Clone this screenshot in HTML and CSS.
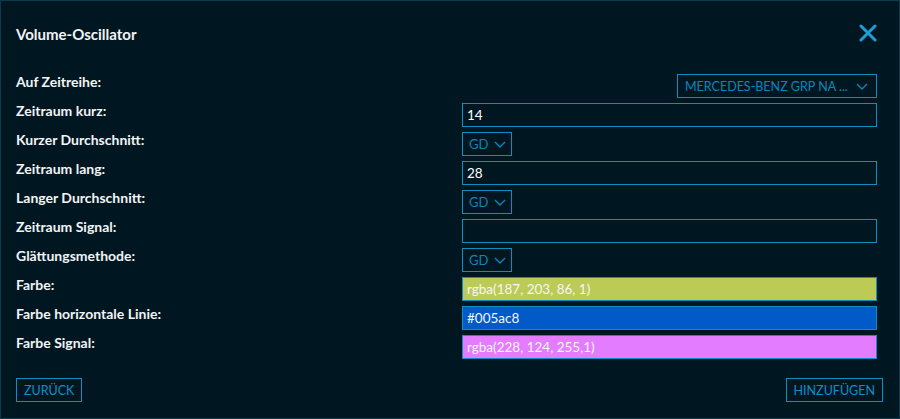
FILE: index.html
```html
<!DOCTYPE html>
<html lang="de">
<head>
    <meta charset="UTF-8">
    <meta name="viewport" content="width=device-width, initial-scale=1.0">
    <title>Volume-Oscillator</title>
    <link rel="stylesheet" href="styles.css">
</head>
<body>
    <div class="dialog">
        <div class="dialog-header">
            <h1>Volume-Oscillator</h1>
            <button class="close-btn" type="button" aria-label="Schließen">
                <svg width="18" height="18" viewBox="0 0 18 18">
                    <path d="M2 2 L16 16 M16 2 L2 16" stroke="currentColor" stroke-width="3" stroke-linecap="round"/>
                </svg>
            </button>
        </div>

        <form class="settings">
            <label>Auf Zeitreihe:</label>
            <div class="control right">
                <div class="dropdown wide">
                    <span>MERCEDES-BENZ GRP NA ...</span>
                    <svg class="chevron" width="12" height="7" viewBox="0 0 12 7"><path d="M1 1 L6 6 L11 1" fill="none" stroke="currentColor" stroke-width="1.4"/></svg>
                </div>
            </div>

            <label>Zeitraum kurz:</label>
            <input class="field" type="text" value="14">

            <label>Kurzer Durchschnitt:</label>
            <div class="control">
                <div class="dropdown">
                    <span>GD</span>
                    <svg class="chevron" width="12" height="7" viewBox="0 0 12 7"><path d="M1 1 L6 6 L11 1" fill="none" stroke="currentColor" stroke-width="1.4"/></svg>
                </div>
            </div>

            <label>Zeitraum lang:</label>
            <input class="field" type="text" value="28">

            <label>Langer Durchschnitt:</label>
            <div class="control">
                <div class="dropdown">
                    <span>GD</span>
                    <svg class="chevron" width="12" height="7" viewBox="0 0 12 7"><path d="M1 1 L6 6 L11 1" fill="none" stroke="currentColor" stroke-width="1.4"/></svg>
                </div>
            </div>

            <label>Zeitraum Signal:</label>
            <input class="field" type="text" value="">

            <label>Glättungsmethode:</label>
            <div class="control">
                <div class="dropdown">
                    <span>GD</span>
                    <svg class="chevron" width="12" height="7" viewBox="0 0 12 7"><path d="M1 1 L6 6 L11 1" fill="none" stroke="currentColor" stroke-width="1.4"/></svg>
                </div>
            </div>

            <label>Farbe:</label>
            <input class="field color" type="text" value="rgba(187, 203, 86, 1)" style="background-color: rgba(187, 203, 86, 1);">

            <label>Farbe horizontale Linie:</label>
            <input class="field color" type="text" value="#005ac8" style="background-color: #005ac8;">

            <label>Farbe Signal:</label>
            <input class="field color" type="text" value="rgba(228, 124, 255,1)" style="background-color: rgba(228, 124, 255, 1);">
        </form>

        <div class="dialog-footer">
            <button type="button" class="outline-btn">Zurück</button>
            <button type="button" class="outline-btn">Hinzufügen</button>
        </div>
    </div>
</body>
</html>
```

FILE: styles.css
```css
* {
    box-sizing: border-box;
}

body {
    margin: 0;
    background-color: #001722;
    font-family: Lato, "Open Sans", sans-serif;
    color: #ffffff;
}

.dialog {
    width: 900px;
    height: 419px;
    border: 1px solid #0b3a4d;
    background-color: #001722;
    display: flex;
    flex-direction: column;
}

.dialog-header {
    height: 66px;
    padding: 0 22px 0 15px;
    display: flex;
    align-items: center;
    justify-content: space-between;
}

h1 {
    margin: 0;
    font-size: 15px;
    font-weight: bold;
    color: #f2f4f5;
}

.close-btn {
    background: none;
    border: none;
    padding: 0;
    color: #1a9fd8;
    cursor: pointer;
    display: flex;
    margin-top: -2px;
}

.settings {
    margin-top: 7px;
    padding: 0 22px 0 15px;
    display: grid;
    grid-template-columns: 1fr 415px;
    row-gap: 5px;
}

.settings label {
    font-size: 14px;
    font-weight: bold;
    line-height: 16px;
    color: #f2f4f5;
    white-space: nowrap;
}

.field {
    height: 24px;
    width: 100%;
    border: 1px solid #0a8fc0;
    background-color: #001722;
    color: #ffffff;
    font-family: Lato, "Open Sans", sans-serif;
    font-size: 13.5px;
    padding: 0 4px;
    outline: none;
}

.field.color {
    color: #f6f6f6;
}

.control {
    display: flex;
}

.control.right {
    justify-content: flex-end;
}

.dropdown {
    height: 24px;
    border: 1px solid #0a8fc0;
    color: #0a86b8;
    font-size: 13px;
    display: flex;
    align-items: center;
    gap: 6px;
    padding: 0 5px 0 6px;
    white-space: nowrap;
}

.dropdown.wide {
    width: 200px;
    justify-content: space-between;
    padding: 0 8px 0 7px;
    font-size: 12.5px;
    overflow: hidden;
}

.chevron {
    margin-top: 1px;
    flex-shrink: 0;
}

.dialog-footer {
    margin-top: auto;
    padding: 0 16px 16px 15px;
    display: flex;
    justify-content: space-between;
}

.outline-btn {
    height: 24px;
    background: none;
    border: 1px solid #0a8fc0;
    color: #0d8fc4;
    font-family: Lato, "Open Sans", sans-serif;
    font-size: 12.5px;
    text-transform: uppercase;
    padding: 0 7px;
    cursor: pointer;
}
```
